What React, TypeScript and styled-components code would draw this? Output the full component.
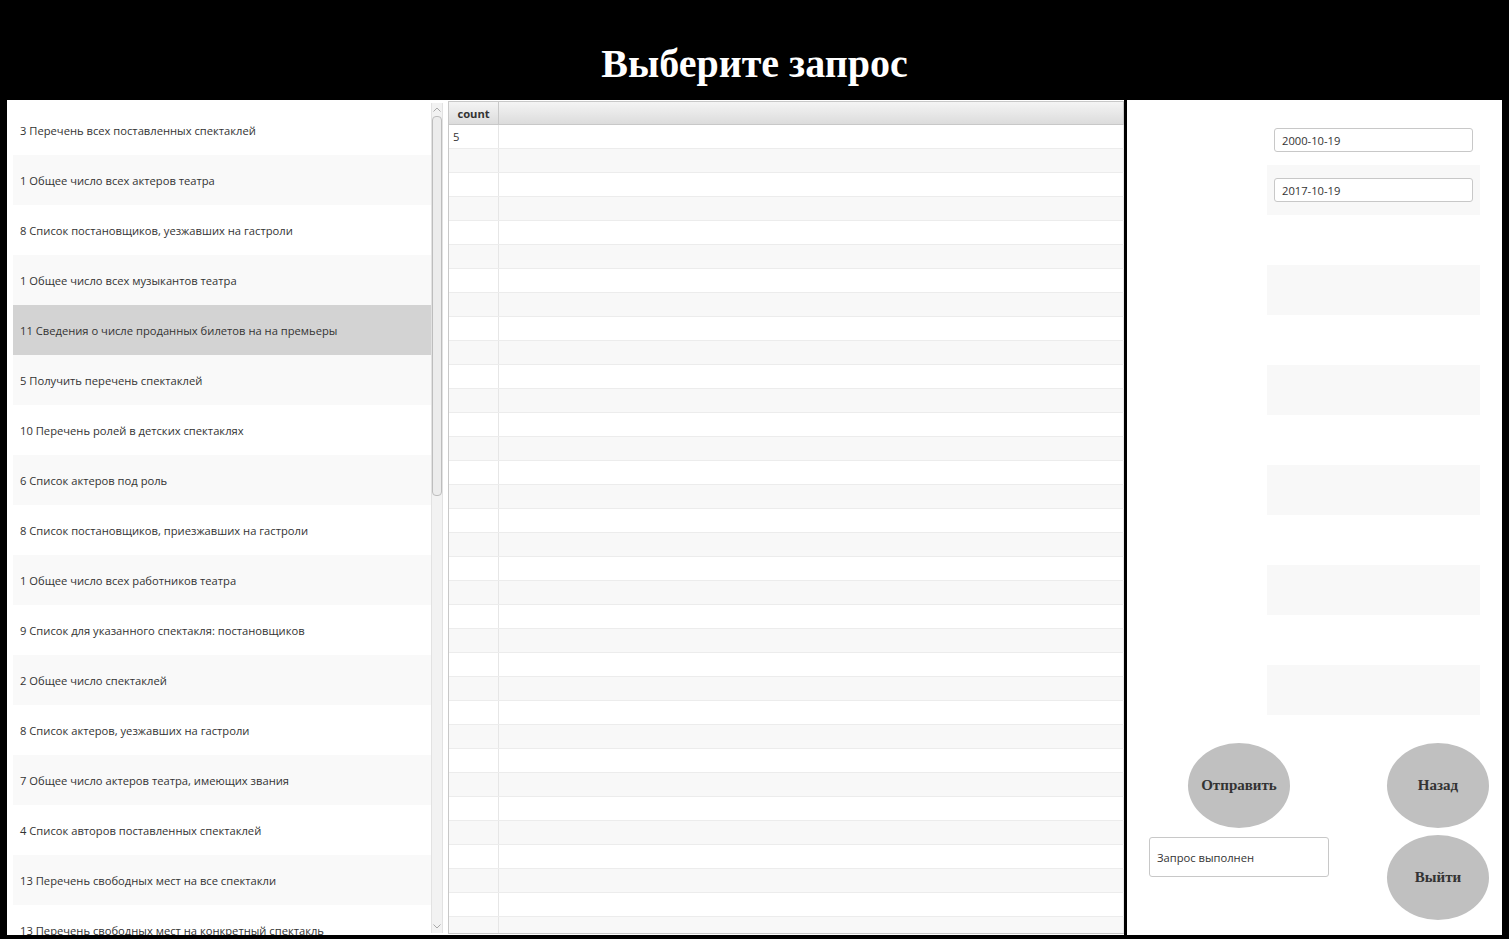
import styled, { createGlobalStyle } from "styled-components";

const GlobalStyle = createGlobalStyle`
  html, body {
    margin: 0;
    padding: 0;
    background: #000;
  }
  * {
    box-sizing: border-box;
  }
`;

const Page = styled.div`
  width: 1509px;
  height: 939px;
  background: #000;
  overflow: hidden;
`;

const Header = styled.header`
  height: 100px;
  display: flex;
  align-items: center;
  justify-content: center;
  padding-top: 26px;
  h1 {
    margin: 0;
    color: #fff;
    font-family: "Liberation Serif", "Times New Roman", serif;
    font-weight: bold;
    font-size: 40px;
  }
`;

const Main = styled.main`
  display: flex;
  gap: 3px;
  padding-left: 7px;
  height: 835px;
`;

const Workspace = styled.section`
  width: 1117px;
  background: #fff;
  display: flex;
  gap: 4px;
`;

const ListPanel = styled.div`
  width: 437px;
  padding: 5px 0 0 6px;
  display: flex;
  overflow: hidden;
`;

const Items = styled.ul`
  list-style: none;
  margin: 0;
  padding: 0;
  width: 418px;
  height: 100%;
  overflow: hidden;
`;

const Item = styled.li<{ $odd: boolean; $selected?: boolean }>`
  height: 50px;
  display: flex;
  align-items: center;
  padding-left: 7px;
  font-family: "Open Sans", "Noto Sans", sans-serif;
  font-size: 11.2px;
  color: #333;
  white-space: nowrap;
  background: ${(p) => (p.$selected ? "#d3d3d3" : p.$odd ? "#f9f9f9" : "#fff")};
`;

const ScrollBar = styled.div`
  width: 12px;
  margin-top: -2px;
  height: 100%;
  background: #f2f2f2;
  border-left: 1px solid #e2e2e2;
  border-right: 1px solid #e2e2e2;
  display: flex;
  flex-direction: column;
  align-items: center;
`;

const Arrow = styled.div`
  height: 13px;
  display: flex;
  align-items: center;
  justify-content: center;
  svg {
    width: 8px;
    height: 5px;
  }
`;

const Thumb = styled.div`
  width: 10px;
  height: 380px;
  background: #ececec;
  border: 1px solid #bdbdbd;
  border-radius: 4px;
`;

const Filler = styled.div`
  flex: 1;
`;

const Table = styled.div`
  flex: 1;
  margin-top: 1px;
  margin-bottom: 1px;
  border: 1px solid #c8c8c8;
  border-right: none;
  overflow: hidden;
  font-family: "Open Sans", "Noto Sans", sans-serif;
  font-size: 11.2px;
  color: #333;
`;

const Row = styled.div<{ $odd?: boolean }>`
  display: grid;
  grid-template-columns: 50px 1fr;
  height: 24px;
  border-bottom: 1px solid #ececec;
  background: ${(p) => (p.$odd ? "#f8f8f8" : "#fff")};
`;

const HeadRow = styled(Row)`
  height: 23px;
  background: linear-gradient(#f4f4f4, #dcdcdc);
  border-bottom: 1px solid #c8c8c8;
  font-weight: bold;
`;

const Cell = styled.div<{ $center?: boolean }>`
  display: flex;
  align-items: center;
  padding-left: 4px;
  justify-content: ${(p) => (p.$center ? "center" : "flex-start")};
  border-right: 1px solid #e6e6e6;
`;

const HeadCell = styled(Cell)`
  border-right-color: #c8c8c8;
  padding-left: 0;
`;

const SidePanel = styled.aside`
  width: 375px;
  background: #fff;
  display: flex;
  flex-direction: column;
  padding-top: 15px;
`;

const Form = styled.div`
  margin-left: 140px;
  width: 213px;
  display: flex;
  flex-direction: column;
`;

const FormRow = styled.div<{ $odd: boolean }>`
  height: 50px;
  padding: 0 7px;
  display: flex;
  align-items: center;
  background: ${(p) => (p.$odd ? "#f8f8f8" : "#fff")};
`;

const Field = styled.div<{ $h?: number }>`
  width: 100%;
  height: ${(p) => p.$h ?? 24}px;
  border: 1px solid #c8c8c8;
  border-radius: 3px;
  background: #fff;
  display: flex;
  align-items: center;
  padding-left: 7px;
  font-family: "Open Sans", "Noto Sans", sans-serif;
  font-size: 11.2px;
  color: #333;
`;

const Controls = styled.div`
  margin-top: 28px;
  padding-left: 22px;
  display: grid;
  grid-template-columns: 180px 102px;
  column-gap: 58px;
  row-gap: 7px;
  justify-items: center;
  align-items: start;
`;

const RoundButton = styled.button`
  width: 102px;
  height: 85px;
  border: none;
  border-radius: 50%;
  background: #c0c0c0;
  color: #333;
  font-family: "Liberation Serif", "Times New Roman", serif;
  font-weight: bold;
  font-size: 15px;
  padding: 0;
`;

const Status = styled(Field)`
  margin-top: 2px;
`;

const queries = [
  "3 Перечень всех поставленных спектаклей",
  "1 Общее число всех актеров театра",
  "8 Список постановщиков, уезжавших на гастроли",
  "1 Общее число всех музыкантов театра",
  "11 Сведения о числе проданных билетов на на премьеры",
  "5 Получить перечень спектаклей",
  "10 Перечень ролей в детских спектаклях",
  "6 Список актеров под роль",
  "8 Список постановщиков, приезжавших на гастроли",
  "1 Общее число всех работников театра",
  "9 Список для указанного спектакля: постановщиков",
  "2 Общее число спектаклей",
  "8 Список актеров, уезжавших на гастроли",
  "7 Общее число актеров театра, имеющих звания",
  "4 Список авторов поставленных спектаклей",
  "13 Перечень свободных мест на все спектакли",
  "13 Перечень свободных мест на конкретный спектакль",
];

const Chevron = ({ down }: { down?: boolean }) => (
  <svg viewBox="0 0 8 5" fill="none" stroke="#a8a8a8" strokeWidth="1">
    {down ? <path d="M0.5 0.5 L4 4 L7.5 0.5" /> : <path d="M0.5 4.5 L4 1 L7.5 4.5" />}
  </svg>
);

export default function App() {
  return (
    <Page>
      <GlobalStyle />
      <Header>
        <h1>Выберите запрос</h1>
      </Header>
      <Main>
        <Workspace>
          <ListPanel>
            <Items>
              {queries.map((q, i) => (
                <Item key={i} $odd={i % 2 === 1} $selected={i === 4}>
                  {q}
                </Item>
              ))}
            </Items>
            <ScrollBar>
              <Arrow>
                <Chevron />
              </Arrow>
              <Thumb />
              <Filler />
              <Arrow>
                <Chevron down />
              </Arrow>
            </ScrollBar>
          </ListPanel>
          <Table>
            <HeadRow>
              <HeadCell $center>count</HeadCell>
              <HeadCell />
            </HeadRow>
            {Array.from({ length: 34 }).map((_, i) => (
              <Row key={i} $odd={i % 2 === 1}>
                <Cell>{i === 0 ? "5" : ""}</Cell>
                <Cell />
              </Row>
            ))}
          </Table>
        </Workspace>
        <SidePanel>
          <Form>
            {Array.from({ length: 12 }).map((_, i) => (
              <FormRow key={i} $odd={i % 2 === 1}>
                {i === 0 && <Field>2000-10-19</Field>}
                {i === 1 && <Field>2017-10-19</Field>}
              </FormRow>
            ))}
          </Form>
          <Controls>
            <RoundButton>Отправить</RoundButton>
            <RoundButton>Назад</RoundButton>
            <Status $h={40}>Запрос выполнен</Status>
            <RoundButton>Выйти</RoundButton>
          </Controls>
        </SidePanel>
      </Main>
    </Page>
  );
}
